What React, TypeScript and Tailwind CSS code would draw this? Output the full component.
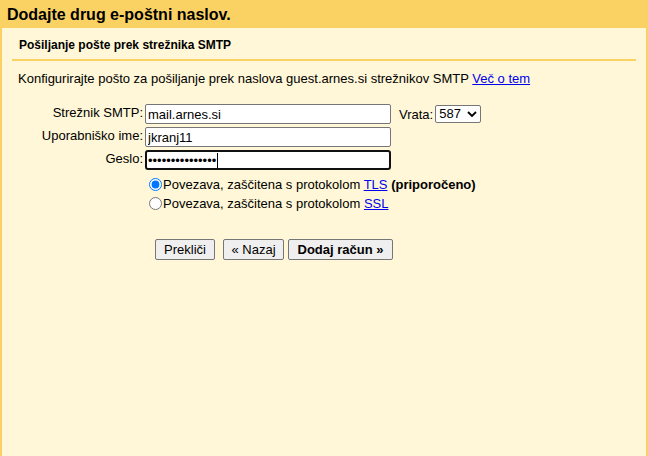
import { useState } from 'react'

const font = { fontFamily: '"Liberation Sans", Arial, sans-serif' }

export default function App() {
  const [secure, setSecure] = useState<'tls' | 'ssl'>('tls')

  return (
    <div className="w-[648px] h-[456px] bg-[#fad163] flex flex-col text-[13px] text-black" style={font}>
      {/* naslov */}
      <div className="h-[28px] pl-[7px] pt-[5px] text-[16px] font-bold leading-[19px]">Dodajte drug e-poštni naslov.</div>

      <div className="flex-1 bg-[#fff7d7] ml-[2px] mr-[2px] flex flex-col">
        <div className="pl-[17px] pt-[10px] h-[31px] text-[12px] font-bold leading-[15px]">Pošiljanje pošte prek strežnika SMTP</div>
        <div className="mx-[10px] h-[2px] bg-[#fad163]" />

        <div className="pl-[16px] pt-[10px] leading-[15px]">
          Konfigurirajte pošto za pošiljanje prek naslova guest.arnes.si strežnikov SMTP{' '}
          <a href="#" className="text-[#0000ee] underline">Več o tem</a>
        </div>

        <div className="pt-[18px] flex flex-col gap-[3px]">
          <div className="flex items-start">
            <label className="w-[141px] text-right pt-[1px] leading-[15px]">Strežnik SMTP:</label>
            <input
              defaultValue="mail.arnes.si"
              className="ml-[2px] w-[246px] h-[20px] border border-[#767676] rounded-[2px] bg-white px-[2px] text-[13px] outline-none"
              style={font}
            />
            <span className="ml-[8px] pt-[3px] leading-[15px]">Vrata:</span>
            <div className="ml-[2px] mt-[1px] w-[46px] h-[18px] border border-[#767676] rounded-[2px] bg-white flex items-center justify-between px-[3px]">
              <span>587</span>
              <svg width="10" height="8" viewBox="0 0 10 8"><path d="M1 2l4 4 4-4" stroke="#000" strokeWidth="1.8" fill="none" /></svg>
            </div>
          </div>
          <div className="flex items-start">
            <label className="w-[141px] text-right pt-[1px] leading-[15px]">Uporabniško ime:</label>
            <input
              defaultValue="jkranj11"
              className="ml-[2px] w-[246px] h-[20px] border border-[#767676] rounded-[2px] bg-white px-[2px] text-[13px] outline-none"
              style={font}
            />
          </div>
          <div className="flex items-start">
            <label className="w-[141px] text-right pt-[1px] leading-[15px]">Geslo:</label>
            <div className="ml-[2px] w-[246px] h-[20px] border-2 border-[#101010] rounded-[3px] bg-white px-[1px] flex items-center">
              <span className="text-[13px] leading-none">•••••••••••••••</span>
              <span className="ml-[1px] w-[1px] h-[15px] bg-black" />
            </div>
          </div>
        </div>

        <div className="pl-[144px] pt-[7px] flex flex-col gap-[4px]">
          <label className="flex items-center leading-[15px]">
            <input type="radio" name="sec" checked={secure === 'tls'} onChange={() => setSecure('tls')} className="m-0 ml-[3px] mr-[1px] w-[13px] h-[13px] accent-[#0075ff]" />
            <span>Povezava, zaščitena s protokolom <a href="#" className="text-[#0000ee] underline">TLS</a> <b>(priporočeno)</b></span>
          </label>
          <label className="flex items-center leading-[15px]">
            <input type="radio" name="sec" checked={secure === 'ssl'} onChange={() => setSecure('ssl')} className="m-0 ml-[3px] mr-[1px] w-[13px] h-[13px]" />
            <span>Povezava, zaščitena s protokolom <a href="#" className="text-[#0000ee] underline">SSL</a></span>
          </label>
        </div>

        <div className="pl-[153px] pt-[28px] flex gap-[8px]">
          <button className="w-[60px] h-[21px] border border-[#767676] rounded-[2px] bg-[#efefef] text-[13px] leading-none" style={font}>Prekliči</button>
          <div className="flex gap-[4px]">
            <button className="w-[61px] h-[21px] border border-[#767676] rounded-[2px] bg-[#efefef] text-[13px] leading-none" style={font}>« Nazaj</button>
            <button className="w-[105px] h-[21px] border border-[#767676] rounded-[2px] bg-[#efefef] text-[13px] font-bold leading-none" style={font}>Dodaj račun »</button>
          </div>
        </div>
      </div>
    </div>
  )
}
